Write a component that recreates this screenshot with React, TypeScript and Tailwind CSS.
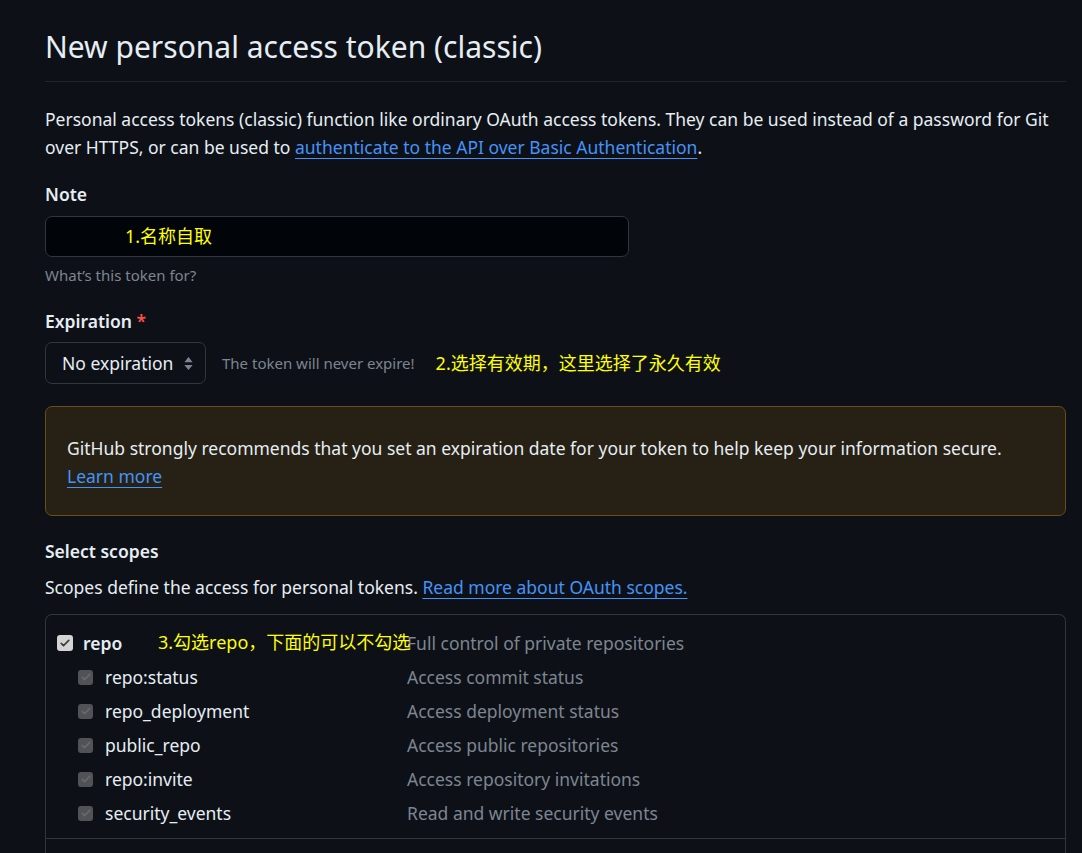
import React from 'react'

const sans = 'font-["Noto_Sans","Noto_Sans_CJK_SC",sans-serif]'

const subScopes = [
  { name: 'repo:status', desc: 'Access commit status' },
  { name: 'repo_deployment', desc: 'Access deployment status' },
  { name: 'public_repo', desc: 'Access public repositories' },
  { name: 'repo:invite', desc: 'Access repository invitations' },
  { name: 'security_events', desc: 'Read and write security events' },
]

function Check({ dim }: { dim?: boolean }) {
  return (
    <span
      className={
        dim
          ? 'flex h-[15px] w-[15px] items-center justify-center rounded-[3px] bg-[#505256]'
          : 'flex h-[16px] w-[16px] items-center justify-center rounded-[3px] bg-[#d4d4d4]'
      }>
      <svg viewBox="0 0 16 16" className="h-[12px] w-[12px]" fill="none">
        <path
          d="M3 8.5l3 3 7-7"
          stroke={dim ? '#66696d' : '#3b3b3b'}
          strokeWidth="2.2"
          strokeLinecap="round"
          strokeLinejoin="round"
        />
      </svg>
    </span>
  )
}

export default function App() {
  return (
    <div className={`min-h-[853px] w-full overflow-hidden bg-[#0d1117] text-[#e6edf3] ${sans}`}>
      <div className="pl-[45px] pr-[16px] pt-[27px]">
        <h1 className="border-b border-[#21262d] pb-[14px] text-[30px] leading-[40px] font-normal">
          New personal access token (classic)
        </h1>

        <p className="mt-[23px] text-[17.5px] leading-[28px]">
          Personal access tokens (classic) function like ordinary OAuth access tokens. They can be used instead of a password for Git over HTTPS, or can be used to{' '}
          <a className="text-[#4493f8] underline underline-offset-[4px]">authenticate to the API over Basic Authentication</a>.
        </p>

        <div className="mt-[20px] text-[17.5px] leading-[26px] font-semibold">Note</div>
        <div className="mt-[9px] flex h-[41px] w-[584px] items-center rounded-[7px] border border-[#30363d] bg-[#010409] pl-[79px]">
          <span className="text-[18px] text-[#ffff00]">1.名称自取</span>
        </div>
        <div className="mt-[7px] text-[15px] leading-[22px] text-[#7d8590]">What’s this token for?</div>

        <div className="mt-[22px] text-[17.5px] leading-[26px] font-semibold">
          Expiration <span className="text-[#f85149]">*</span>
        </div>
        <div className="mt-[8px] flex items-center">
          <div className="flex h-[42px] w-[161px] items-center justify-between rounded-[7px] border border-[#30363d] bg-[#0d1117] pl-[16px] pr-[11px]">
            <span className="text-[17.5px]">No expiration</span>
            <svg viewBox="0 0 12 18" className="h-[17px] w-[11px]" fill="#7d8590">
              <path d="M6 2l4.5 5.5h-9z" />
              <path d="M6 16l4.5-5.5h-9z" />
            </svg>
          </div>
          <span className="ml-[16px] text-[15px] text-[#7d8590]">The token will never expire!</span>
          <span className="ml-[21px] text-[18px] text-[#ffff00]">2.选择有效期，这里选择了永久有效</span>
        </div>

        <div className="mt-[22px] rounded-[7px] border border-[#6b4d10] bg-[#272115] px-[21px] pt-[27px] pb-[25px] text-[17.5px] leading-[28px]">
          GitHub strongly recommends that you set an expiration date for your token to help keep your information secure.
          <br />
          <a className="text-[#4493f8] underline underline-offset-[4px]">Learn more</a>
        </div>

        <div className="mt-[22px] text-[17.5px] leading-[26px] font-semibold">Select scopes</div>
        <p className="mt-[10px] text-[17.5px] leading-[26px]">
          Scopes define the access for personal tokens.{' '}
          <a className="text-[#4493f8] underline underline-offset-[4px]">Read more about OAuth scopes.</a>
        </p>

        <div className="mt-[14px] rounded-t-[7px] border-x border-t border-[#30363d] pt-[11px]">
          <div className="relative flex h-[34px] items-center">
            <div className="flex w-[361px] items-center pl-[11px]">
              <Check />
              <span className="ml-[10px] text-[17.5px] font-semibold">repo</span>
            </div>
            <span className="text-[17.5px] text-[#7d8590]">Full control of private repositories</span>
            <span className="absolute left-[112px] top-[3px] text-[18px] text-[#ffff00]">3.勾选repo，下面的可以不勾选</span>
          </div>
          {subScopes.map((s) => (
            <div key={s.name} className="flex h-[34px] items-center">
              <div className="flex w-[361px] items-center pl-[32px]">
                <Check dim />
                <span className="ml-[12px] text-[17.5px]">{s.name}</span>
              </div>
              <span className="text-[17.5px] text-[#7d8590]">{s.desc}</span>
            </div>
          ))}
          <div className="mt-[8px] h-[30px] border-t border-[#30363d]" />
        </div>
      </div>
    </div>
  )
}
